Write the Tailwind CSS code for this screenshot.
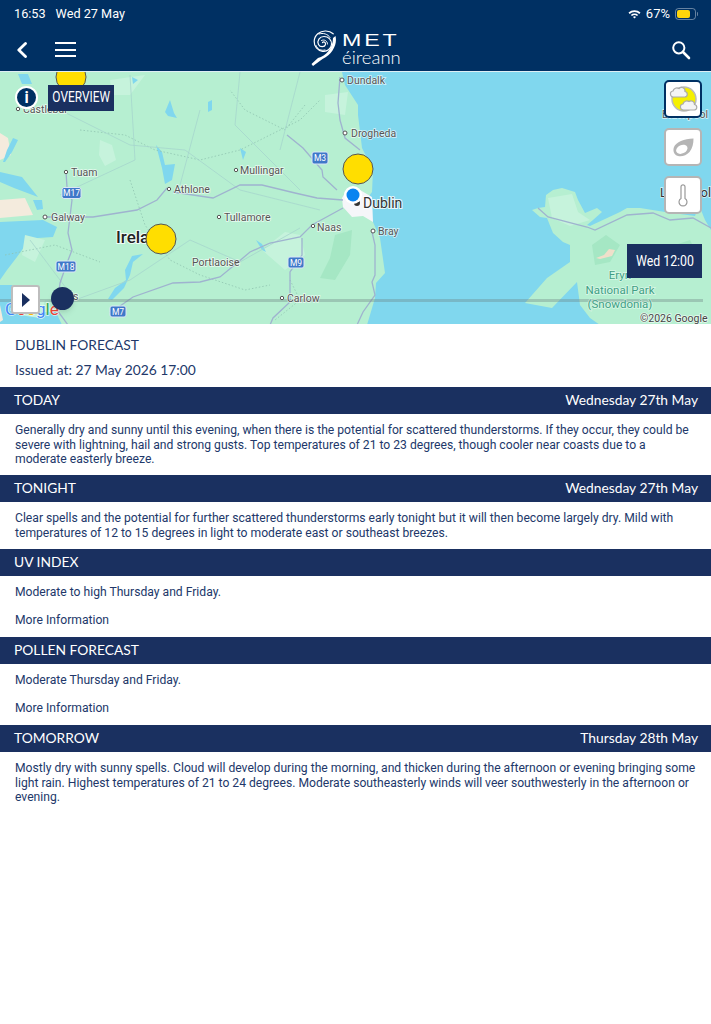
<!DOCTYPE html>
<html lang="en">

<head>
  <meta charset="UTF-8" />
  <meta name="viewport" content="width=device-width, initial-scale=1.0" />
  <title>Met Eireann Forecast</title>
  <script src="https://cdn.jsdelivr.net/npm/@tailwindcss/browser@4"></script>
</head>

<body class="flex min-h-screen flex-col overflow-hidden bg-white font-['Roboto',sans-serif] text-[#22386a]">
  <!-- status bar + app header -->
  <header class="h-[71px] bg-[#003063] text-white">
    <div class="flex h-[28px] items-center justify-between pl-[14px] pr-[13px] text-[12.700px]">
      <div class="flex gap-[10px]"><span>16:53</span><span>Wed 27 May</span></div>
      <div class="flex items-center gap-[5px]">
        <svg width="13" height="10" viewBox="0 0 13 10" fill="#fff">
          <path d="M0.5 3.6 A8.6 8.6 0 0 1 12.5 3.6 L11.3 4.9 A6.8 6.8 0 0 0 1.7 4.9 Z" />
          <path d="M2.8 5.9 A5.4 5.4 0 0 1 10.2 5.9 L9 7.1 A3.7 3.7 0 0 0 4 7.1 Z" />
          <path d="M5 8 A2.2 2.2 0 0 1 8 8 L6.5 9.6 Z" />
        </svg>
        <span class="text-[13px]">67%</span>
        <div class="flex items-center gap-px">
          <div class="h-[12px] w-[21px] rounded-[3.5px] border border-white/40 p-px">
            <div class="h-full w-[13px] rounded-[2px] bg-[#ffd60a]"></div>
          </div>
          <div class="h-[4px] w-px rounded-r bg-white/40"></div>
        </div>
      </div>
    </div>
    <nav class="relative flex h-[43px] items-center pl-[16px] pr-[20px]">
      <svg width="12" height="16" viewBox="0 0 12 16" fill="none" stroke="#fff" stroke-width="2.8" stroke-linecap="round" stroke-linejoin="round">
        <path d="M9.5 1.5 L2.8 8 L9.5 14.5" />
      </svg>
      <div class="ml-[27px] flex w-[21px] flex-col gap-[4.5px]">
        <div class="h-[2px] bg-white"></div>
        <div class="h-[2px] bg-white"></div>
        <div class="h-[2px] bg-white"></div>
      </div>
      <div class="absolute left-[311px] top-[2px] flex items-start gap-[4px]">
        <svg width="26" height="36" viewBox="0 0 26 36" fill="none" stroke="#fff" stroke-linecap="round">
          <path stroke-width="1.200" d="M11.500 12.500 c1.500 -1.500 3.500 0 3 2 c-.8 2.800 -5.500 3 -7 0 c-1.800 -3.800 1 -8 5.500 -8 c4.500 0 8 3.500 7.500 8 c-.5 4.500 -4.500 7.500 -9 6.800 c-5 -.8 -8.500 -5 -8.300 -10 c.2 -6 5.500 -10.500 11.500 -10.300 c3 .1 5.500 1 7.500 2.800" />
          <path stroke-width="1" d="M10.500 10.500 c3 -1.500 6 .5 6 3.500 M5 15.500 c1.500 4 5 5.500 9 4.500 M8 4 c4 -1.500 9 0 11 3.500" />
          <path fill="#fff" stroke="none" d="M24.500 6 C26.500 14 22 24 11.500 29 L2 36 L0.500 34 L7 28 C15 26 22 18 22 8 Z" />
        </svg>
        <div class="flex w-[62px] flex-col items-start pl-px pt-[4px] leading-none">
          <span class="origin-left scale-x-[1.450] font-['Liberation_Sans',sans-serif] text-[16px] leading-[14px] tracking-[2px]">MET</span>
          <span class="font-['Lato',sans-serif] text-[18.500px] font-light leading-[19px]">éireann</span>
        </div>
      </div>
      <svg class="ml-auto" width="20" height="20" viewBox="0 0 20 20" fill="none" stroke="#fff" stroke-linecap="round">
        <circle cx="7.8" cy="7.8" r="5.6" stroke-width="2" />
        <path d="M12 12 L18 18" stroke-width="2.6" />
      </svg>
    </nav>
  </header>

  <!-- weather map -->
  <section class="relative h-[253px] overflow-hidden border-t border-[#dfeef4]">
    <svg class="absolute inset-0" width="711" height="253" viewBox="0 72 711 253">
      <rect x="0" y="72" width="711" height="253" fill="#80d7ee" />
      <!-- Ireland -->
      <path fill="#b6efd1" d="M0 72 L342 72 L345 85 L358 105 L358 115 L362 148 L373 170 L372 192 L366 200 L373 222 L380 238 L385 273 L376 283 L375 298 L367 325 L0 325 L0 280 L7 270 L17 257 L27 243 L38 238 L53 237 L57 227 L43 220 L0 222 Z" />
      <path fill="#80d7ee" d="M0 285 L12 285 L22 300 L38 312 L56 312 L62 325 L0 325 Z" />
      <path fill="#c6f3dc" d="M100 140 L112 145 L116 160 L105 166 L99 155 Z M325 95 L348 92 L345 115 L325 112 Z M20 300 L45 300 L40 318 L20 315 Z M262 250 L285 232 L300 235 L305 255 L285 270 Z M25 235 L45 240 L35 262 L22 255 Z M110 80 L145 75 L130 95 L112 95 Z" />
      <path fill="#a5e7c4" d="M335 235 L352 230 L350 255 L335 280 L320 278 L330 258 Z" />
      <path fill="#f4ebdd" d="M0 133 L8 138 L11 155 L0 160 Z M0 200 L25 198 L33 215 L0 218 Z M0 305 L3 320 L0 322 Z" />
      <!-- lakes -->
      <path fill="#80d7ee" d="M18 74 L28 74 L32 84 L22 84 Z M132 77 L138 80 L133 84 Z M165 112 L170 100 L174 113 L177 118 L168 116 Z M208 102 L212 100 L212 110 L208 112 Z M5 162 L12 152 L18 140 L13 138 L7 150 L3 162 Z M0 172 L22 177 L38 197 L14 188 L0 182 Z M156 145 L162 152 L165 165 L175 164 L172 180 L165 184 L162 168 Z M33 200 L42 200 L43 209 L37 210 Z M143 254 L132 256 L125 270 L126 280 L115 288 L108 299 L112 300 L124 288 L130 275 L133 262 Z M256 240 L262 244 L266 252 L262 250 Z M240 148 L246 152 L243 160 Z" />
      <!-- Dublin urban -->
      <path fill="#f5f6f9" d="M342 198 L348 188 L360 190 L372 197 L373 222 L363 216 L352 217 L343 207 Z" />
      <!-- Wales -->
      <path fill="#b6efd1" d="M532 210 L538 208 L545 207 L546 195 L553 190 L562 188 L575 192 L578 200 L585 213 L597 208 L602 212 L593 220 L587 225 L590 226 L620 212 L627 208 L640 208 L665 212 L695 216 L699 205 L705 220 L711 230 L711 325 L600 325 L590 318 L580 305 L577 282 L552 308 L525 303 L547 278 L570 262 L570 245 L563 242 L553 233 L547 218 L540 217 Z" />
      <path fill="#c6f3dc" d="M548 198 L572 194 L578 212 L590 220 L570 226 L552 218 Z" />
      <path fill="#a5e7c4" d="M592 245 L606 235 L620 245 L610 262 L595 265 Z M660 250 L690 240 L700 260 L670 275 Z" />
      <path fill="#efdfca" d="M596 258 L604 255 L609 249 L615 250 L612 256 L604 258 L600 259 Z" />
      <!-- county borders -->
      <g fill="none" stroke="#8fc4b0" stroke-width="0.8" stroke-dasharray="1.5 2">
        <path d="M80 130 L125 135 L155 150 L200 160 L240 150 L300 120 L320 100" />
        <path d="M130 180 L145 225 L170 260 L200 275 L245 290 L270 285" />
        <path d="M290 280 L300 300 L275 320" />
        <path d="M5 255 L55 245 L100 262" />
        <path d="M305 105 L285 130 L245 110 L230 90" />
      </g>
      <!-- small roads -->
      <g fill="none" stroke="#a6d6cd" stroke-width="0.8">
        <path d="M60 110 L130 145 L185 150 L240 190 L320 210 M130 75 L135 160 L60 195 M200 110 L180 185 M240 72 L235 125 L300 190 M300 72 L280 150 M30 240 L75 300 L130 280 L190 240 L240 262 L300 228" />
      </g>
      <!-- motorways -->
      <g fill="none" stroke="#9fb3cf" stroke-width="1.300">
        <path d="M340 77 L338 103 L340 120 L345 138 L360 150 M287 135 L303 148 L322 170 L323 177 L337 190" />
        <path d="M66 172 L67 187 L72 200 L68 233 L72 250 L67 263 L60 283 L57 310 L68 325" />
        <path d="M45 217 L93 217 L137 210 L157 200 L167 188 M173 192 L213 198 L240 185 L262 185 L295 193 L317 198 L343 200" />
        <path d="M110 313 L133 297 L173 283 L200 282 L220 277 L237 263 L250 252 L270 243 L300 237 L312 225 L343 208" />
        <path d="M302 238 L302 255 L290 272 L290 302 L273 318 L270 325" />
        <path d="M372 232 L375 245 L375 275 L372 282 L375 295 L363 312 L357 325" />
        <path d="M538 208 L548 217 L587 227 L595 230 L627 215 L653 213 L670 220 L693 218 L711 228" />
      </g>
      <!-- timeline -->
      <rect x="0" y="299" width="703" height="3" fill="#6b7f7f" opacity="0.350" />
      <!-- place dots -->
      <g fill="#fff" stroke="#555" stroke-width="1">
        <circle cx="18" cy="109" r="1.700" /><circle cx="66" cy="172" r="1.700" /><circle cx="45" cy="217" r="2" /><circle cx="169" cy="189" r="1.700" /><circle cx="236" cy="170" r="1.700" /><circle cx="219" cy="217" r="1.700" /><circle cx="313" cy="226" r="1.700" /><circle cx="373" cy="231" r="2" /><circle cx="345" cy="133" r="2" /><circle cx="342" cy="80" r="2" /><circle cx="282" cy="298" r="1.700" /><circle cx="236" cy="262" r="1.700" />
      </g>
      <circle cx="357" cy="203" r="3" fill="#333" />
      <!-- place labels -->
      <g class="font-['Roboto',sans-serif] fill-[#555] stroke-white/70 stroke-[1.500px] text-[10.500px] [paint-order:stroke]">
        <text x="23" y="113">Castlebar</text>
        <text x="71" y="176">Tuam</text>
        <text x="51" y="221">Galway</text>
        <text x="174" y="193">Athlone</text>
        <text x="240" y="174">Mullingar</text>
        <text x="224" y="221">Tullamore</text>
        <text x="192" y="266">Portlaoise</text>
        <text x="317" y="231">Naas</text>
        <text x="378" y="235">Bray</text>
        <text x="287" y="302">Carlow</text>
        <text x="351" y="137">Drogheda</text>
        <text x="347" y="84">Dundalk</text>
        <text x="662" y="118">Blackpool</text>
        <text x="53" y="300">Ennis</text>
      </g>
      <text x="660" y="197" class="font-['Roboto',sans-serif] fill-[#333] stroke-white/70 stroke-[1.500px] text-[12.500px] [paint-order:stroke]">Liverpool</text>
      <text x="116" y="243" class="font-['Roboto',sans-serif] fill-[#222] stroke-white/80 stroke-[2px] text-[17px] font-medium [paint-order:stroke]">Ireland</text>
      <text x="363" y="208" class="font-['Roboto',sans-serif] fill-[#333] stroke-white/80 stroke-[2px] text-[14px] [paint-order:stroke]">Dublin</text>
      <g class="font-['Roboto',sans-serif] fill-[#3f9f84] stroke-white/50 stroke-[1.500px] text-[11.500px] [paint-order:stroke]" text-anchor="middle">
        <text x="620" y="279">Eryri</text>
        <text x="620" y="294">National Park</text>
        <text x="620" y="308">(Snowdonia)</text>
      </g>
      <text x="640" y="322" class="font-['Roboto',sans-serif] fill-[#444] stroke-white/70 stroke-[1.500px] text-[10.500px] [paint-order:stroke]">©2026 Google</text>
      <!-- google logo -->
      <text x="5" y="315" class="font-['Roboto',sans-serif] stroke-white/70 stroke-[1.500px] text-[17px] [paint-order:stroke]"><tspan fill="#4285f4">G</tspan><tspan fill="#ea4335">o</tspan><tspan fill="#fbbc05">o</tspan><tspan fill="#4285f4">g</tspan><tspan fill="#34a853">l</tspan><tspan fill="#ea4335">e</tspan></text>
      <!-- road shields -->
      <g fill="#3f78c9" stroke="#dbe6f6" stroke-width="1">
        <rect x="62" y="187.500" width="19" height="11" rx="2" />
        <rect x="56" y="261" width="20" height="11" rx="2" />
        <rect x="110" y="306" width="16" height="11" rx="2" />
        <rect x="312" y="152" width="16" height="12" rx="2" />
        <rect x="288" y="257" width="16" height="11" rx="2" />
      </g>
      <g class="font-['Roboto',sans-serif] fill-white text-[8.500px]" text-anchor="middle">
        <text x="71.500" y="196">M17</text>
        <text x="66" y="269.500">M18</text>
        <text x="118" y="314.500">M7</text>
        <text x="320" y="161">M3</text>
        <text x="296" y="265.500">M9</text>
      </g>
      <!-- warning markers -->
      <g fill="#ffde00" stroke="#555" stroke-width="1">
        <circle cx="71" cy="77" r="15" />
        <circle cx="358" cy="169" r="15" />
        <circle cx="161" cy="239" r="15" />
      </g>
      <circle cx="353" cy="195" r="9" fill="#fff" />
      <circle cx="353" cy="195" r="6.500" fill="#0a84f0" />
    </svg>

    <!-- overlay controls -->
    <div class="absolute left-[15px] top-[14px] flex h-[23px] w-[23px] items-center justify-center rounded-full border-[2px] border-white bg-[#003063] text-[16px] font-bold text-white">i</div>
    <div class="absolute left-[48px] top-[13px] flex h-[26px] w-[66px] items-center justify-center bg-[#1a3060] text-[14.500px] text-white">
      <span class="scale-x-[0.820] whitespace-nowrap">OVERVIEW</span>
    </div>

    <div class="absolute right-[9px] top-[8px] flex flex-col gap-[10px]">
      <div class="flex h-[38px] w-[38px] items-center justify-center rounded-[5px] border-[2px] border-[#003063] bg-white">
        <svg width="30" height="30" viewBox="0 0 30 30">
          <circle cx="16" cy="15" r="12" fill="#f5f000" stroke="#bbb" stroke-width="1.500" />
          <path d="M6 13 A3 3 0 0 1 5 7 A4 4 0 0 1 11 4.500 A3.500 3.500 0 0 1 17 7.500 A2.800 2.800 0 0 1 17 13 Z" fill="#f4f4f4" stroke="#aaa" stroke-width="1.200" />
          <path d="M16 26 A3 3 0 0 1 15 20 A4 4 0 0 1 21 17.500 A3.500 3.500 0 0 1 26.500 20.500 A2.800 2.800 0 0 1 26.500 26 Z" fill="#f4f4f4" stroke="#aaa" stroke-width="1.200" />
        </svg>
      </div>
      <div class="flex h-[38px] w-[38px] items-center justify-center rounded-[5px] border-[2px] border-[#b5b5b5] bg-white">
        <svg width="21" height="19" viewBox="0 0 21 19">
          <path fill="#b5b5b5" d="M20.500 0.500 C20.500 6 19.500 10 16.500 14 C13.500 17.500 8.500 19 5 18 C1 17 -0.500 13 1 9 C3 4 11 1 20.500 0.500 Z" />
          <ellipse cx="8.800" cy="11.300" rx="6" ry="4.200" transform="rotate(-25 8.800 11.300)" fill="#fff" />
        </svg>
      </div>
      <div class="flex h-[38px] w-[38px] items-center justify-center rounded-[5px] border-[2px] border-[#b5b5b5] bg-white">
        <svg width="10" height="23" viewBox="0 0 10 23" fill="none" stroke="#999" stroke-width="1.200">
          <path d="M3 14.500 L3 2.800 A2 2 0 0 1 7 2.800 L7 14.500 A4 4 0 1 1 3 14.500 Z" />
        </svg>
      </div>
    </div>

    <div class="absolute right-[9px] top-[172px] flex h-[34px] w-[75px] items-center justify-center bg-[#1a3060] text-[14px] text-white">
      <span class="scale-x-[0.880] whitespace-nowrap">Wed 12:00</span>
    </div>

    <div class="absolute left-[11px] top-[213px] flex h-[29px] w-[29px] items-center justify-center rounded-[3px] border-[2px] border-[#bdbdbd] bg-white">
      <svg width="8" height="14" viewBox="0 0 8 14"><path d="M0 0 L8 7 L0 14 Z" fill="#1a3060" /></svg>
    </div>
    <div class="absolute left-[50.500px] top-[215px] h-[23px] w-[23px] rounded-full bg-[#1a3060] shadow-md"></div>
  </section>

  <!-- forecast text -->
  <main class="font-['Lato',sans-serif]">
    <div class="h-[63px] px-[15px] pt-[12px]">
      <h1 class="text-[13.800px] leading-[18px]">DUBLIN FORECAST</h1>
      <p class="mt-[7px] text-[13.800px] leading-[18px]">Issued at: 27 May 2026 17:00</p>
    </div>

    <div class="flex h-[27px] items-center justify-between bg-[#1a3060] pl-[14px] pr-[13px] text-[13.800px] text-white">
      <span>TODAY</span><span>Wednesday 27th May</span>
    </div>
    <p class="h-[61px] px-[15px] pt-[9px] font-['Roboto',sans-serif] text-[12.150px] leading-[14.500px]">Generally dry and sunny until this evening, when there is the potential for scattered thunderstorms. If they occur, they could be<br />severe with lightning, hail and strong gusts. Top temperatures of 21 to 23 degrees, though cooler near coasts due to a<br />moderate easterly breeze.</p>

    <div class="flex h-[27px] items-center justify-between bg-[#1a3060] pl-[14px] pr-[13px] text-[13.800px] text-white">
      <span>TONIGHT</span><span>Wednesday 27th May</span>
    </div>
    <p class="h-[47px] px-[15px] pt-[9px] font-['Roboto',sans-serif] text-[12.150px] leading-[14.500px]">Clear spells and the potential for further scattered thunderstorms early tonight but it will then become largely dry. Mild with<br />temperatures of 12 to 15 degrees in light to moderate east or southeast breezes.</p>

    <div class="flex h-[27px] items-center bg-[#1a3060] pl-[14px] text-[13.800px] text-white">UV INDEX</div>
    <div class="h-[61px] px-[15px] pt-[9px] font-['Roboto',sans-serif] text-[12.150px] leading-[14.500px]">
      <p>Moderate to high Thursday and Friday.</p>
      <p class="mt-[13.500px]">More Information</p>
    </div>

    <div class="flex h-[27px] items-center bg-[#1a3060] pl-[14px] text-[13.800px] text-white">POLLEN FORECAST</div>
    <div class="h-[61px] px-[15px] pt-[9px] font-['Roboto',sans-serif] text-[12.150px] leading-[14.500px]">
      <p>Moderate Thursday and Friday.</p>
      <p class="mt-[13.500px]">More Information</p>
    </div>

    <div class="flex h-[27px] items-center justify-between bg-[#1a3060] pl-[14px] pr-[13px] text-[13.800px] text-white">
      <span>TOMORROW</span><span>Thursday 28th May</span>
    </div>
    <p class="px-[15px] pt-[9px] font-['Roboto',sans-serif] text-[12.150px] leading-[14.500px]">Mostly dry with sunny spells. Cloud will develop during the morning, and thicken during the afternoon or evening bringing some<br />light rain. Highest temperatures of 21 to 24 degrees. Moderate southeasterly winds will veer southwesterly in the afternoon or<br />evening.</p>
  </main>
</body>

</html>
